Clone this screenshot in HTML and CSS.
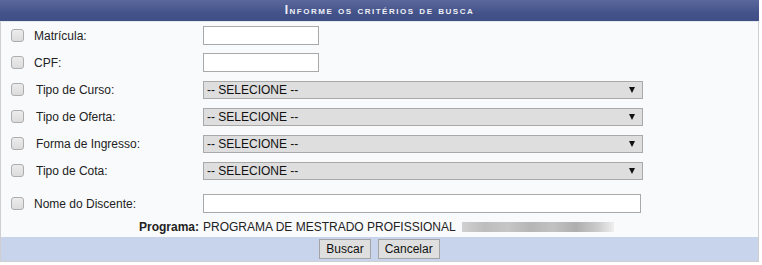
FILE: index.html
```html
<!DOCTYPE html>
<html lang="pt-BR">
<head>
    <meta charset="UTF-8">
    <title>Busca de Discentes</title>
    <link rel="stylesheet" href="styles.css">
</head>
<body>
<div class="busca">
    <div class="caption">Informe os critérios de busca</div>
    <div class="corpo">
        <div class="linha">
            <input type="checkbox" class="marca">
            <label class="rotulo">Matrícula:</label>
            <input type="text" class="campo curto">
        </div>
        <div class="linha">
            <input type="checkbox" class="marca">
            <label class="rotulo">CPF:</label>
            <input type="text" class="campo curto">
        </div>
        <div class="linha">
            <input type="checkbox" class="marca">
            <label class="rotulo recuo">Tipo de Curso:</label>
            <span class="combo"><select class="lista"><option>-- SELECIONE --</option></select></span>
        </div>
        <div class="linha">
            <input type="checkbox" class="marca">
            <label class="rotulo recuo">Tipo de Oferta:</label>
            <span class="combo"><select class="lista"><option>-- SELECIONE --</option></select></span>
        </div>
        <div class="linha">
            <input type="checkbox" class="marca">
            <label class="rotulo recuo">Forma de Ingresso:</label>
            <span class="combo"><select class="lista"><option>-- SELECIONE --</option></select></span>
        </div>
        <div class="linha">
            <input type="checkbox" class="marca">
            <label class="rotulo recuo">Tipo de Cota:</label>
            <span class="combo"><select class="lista"><option>-- SELECIONE --</option></select></span>
        </div>
        <div class="linha nome">
            <input type="checkbox" class="marca">
            <label class="rotulo">Nome do Discente:</label>
            <input type="text" class="campo longo">
        </div>
        <div class="linha programa">
            <span class="titulo">Programa:</span>
            <span class="valor">PROGRAMA DE MESTRADO PROFISSIONAL <span class="oculto"></span></span>
        </div>
    </div>
    <div class="rodape">
        <input type="button" class="botao" value="Buscar">
        <input type="button" class="botao" value="Cancelar">
    </div>
</div>
</body>
</html>
```

FILE: styles.css
```css
body {
    margin: 0;
    padding: 0;
    background-color: #fff;
    font-family: "Liberation Sans", Arial, sans-serif;
    font-size: 12px;
    color: #222;
}

.busca {
    width: 759px;
    border: 1px solid #cfcfcf;
    border-top: none;
    box-sizing: border-box;
    background-color: #f9fafc;
}

.caption {
    margin: 0 -1px;
    height: 21px;
    line-height: 21px;
    border-bottom: 1px solid #e4e7f0;
    background: linear-gradient(#5a689c, #44538a 60%, #3f4e84);
    color: #eef0f6;
    text-align: center;
    font-weight: bold;
    font-size: 12px;
    font-variant: small-caps;
    letter-spacing: 1.5px;
}

.linha {
    display: grid;
    grid-template-columns: 33px 169px 1fr;
    align-items: center;
    height: 27px;
}

.linha.nome {
    margin-top: 6px;
}

.marca {
    appearance: none;
    margin: 0 0 0 10px;
    width: 13px;
    height: 13px;
    border: 1px solid #adadad;
    border-radius: 3px;
    background: linear-gradient(#ececec, #dcdcdc);
    box-sizing: border-box;
}

.rotulo {
    color: #222;
}

.rotulo.recuo {
    padding-left: 2px;
}

.campo {
    height: 19px;
    border: 1px solid #a9a9a9;
    background-color: #fff;
    box-sizing: border-box;
    padding: 0 3px;
    font-family: inherit;
    font-size: 12px;
}

.curto {
    width: 116px;
}

.longo {
    width: 438px;
}

.combo {
    position: relative;
    display: block;
    width: 440px;
}

.lista {
    appearance: none;
    display: block;
    width: 440px;
    height: 18px;
    border: 1px solid #a9a9a9;
    border-radius: 0;
    background-color: #dedede;
    padding: 0 0 0 3px;
    font-family: inherit;
    font-size: 12px;
    color: #111;
}

.combo::after {
    content: "";
    position: absolute;
    right: 8px;
    top: 6px;
    border-left: 3px solid transparent;
    border-right: 3px solid transparent;
    border-top: 6px solid #111;
}

.linha.programa {
    grid-template-columns: 198px 1fr;
    height: 20px;
    column-gap: 4px;
}

.titulo {
    text-align: right;
    font-weight: bold;
}

.valor {
    display: flex;
    align-items: center;
    white-space: nowrap;
}

.oculto {
    display: inline-block;
    margin-left: 6px;
    width: 152px;
    height: 10px;
    background: linear-gradient(90deg, #d0d0d0, #bdbdbd 15%, #c6c6c6 30%, #b5b5b5 45%, #c2c2c2 60%, #aeaeae 75%, #cdcdcd 90%, #efefef);
}

.rodape {
    height: 24px;
    background-color: #c8d4ec;
    display: flex;
    justify-content: center;
    align-items: center;
    gap: 7px;
}

.botao {
    height: 20px;
    margin: 0;
    padding: 0 6px;
    border: 1px solid #a4a4a4;
    border-radius: 0;
    background-color: #dfdfdf;
    font-family: inherit;
    font-size: 12px;
    color: #111;
}
```
